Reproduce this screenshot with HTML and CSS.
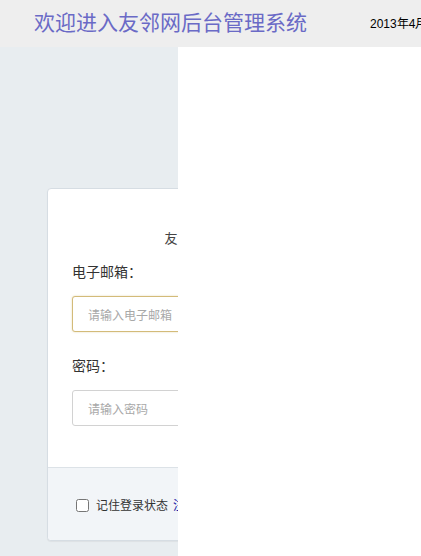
FILE: index.html
```html
<!DOCTYPE html>
<html lang="zh-CN">
<head>
    <meta charset="UTF-8">
    <title>友邻网后台管理系统</title>
    <link rel="stylesheet" href="styles.css">
</head>
<body>
    <div class="header">
        <h1>欢迎进入友邻网后台管理系统</h1>
        <div class="date">2013年4月25日 星期四</div>
    </div>
    <div class="main">
        <div class="login-box">
            <div class="login-body">
                <h2>友邻网后台登录</h2>
                <label class="field-label">电子邮箱：</label>
                <input class="field focus" type="text" placeholder="请输入电子邮箱">
                <label class="field-label">密码：</label>
                <input class="field" type="password" placeholder="请输入密码">
            </div>
            <div class="login-foot">
                <input type="checkbox" class="remember">
                <span>记住登录状态</span>
                <a href="#">注册新用户</a>
            </div>
        </div>
        <div class="frame"></div>
    </div>
</body>
</html>
```

FILE: styles.css
```css
body {
    margin: 0;
    font-family: "Noto Sans CJK SC", sans-serif;
    background-color: #e8edf0;
    color: #333;
    overflow: hidden;
}
.header {
    height: 47px;
    background-color: #eeeeee;
    display: flex;
    align-items: center;
    white-space: nowrap;
}
.header h1 {
    margin: 0 0 0 34px;
    font-size: 21px;
    font-weight: normal;
    color: #6a6ac6;
    line-height: 40px;
    position: relative;
    top: -3px;
}
.header .date {
    margin-left: 63px;
    font-family: "Liberation Sans", Arial, sans-serif;
    font-size: 12px;
    color: #000;
    position: relative;
    top: -1px;
}
.main {
    position: relative;
    height: 509px;
    padding: 141px 0 0 47px;
    box-sizing: border-box;
}
.login-box {
    width: 300px;
    background-color: #fff;
    border: 1px solid #d6dde3;
    border-radius: 4px;
    box-shadow: 0 1px 1px rgba(0, 0, 0, 0.05);
}
.login-body {
    padding: 39px 0 41px 24px;
    display: flex;
    flex-direction: column;
    align-items: flex-start;
}
.login-body h2 {
    align-self: stretch;
    margin: 0 0 13px;
    font-size: 13px;
    font-weight: normal;
    line-height: 20px;
    text-align: center;
    color: #444;
}
.field-label {
    font-size: 14px;
    line-height: 20px;
    color: #333;
}
.field {
    margin: 15px 0 23px;
    width: 240px;
    height: 36px;
    box-sizing: border-box;
    padding: 0 15px;
    border: 1px solid #d2d2d2;
    border-radius: 3px;
    font-family: "Noto Sans CJK SC", sans-serif;
    font-size: 12px;
    outline: none;
}
.field:last-child {
    margin-bottom: 0;
}
.field::placeholder {
    color: #a8a8a8;
}
.field.focus {
    border-color: #d3bb79;
    box-shadow: 0 0 2px rgba(211, 187, 121, 0.6);
}
.login-foot {
    border-top: 1px solid #dce2e7;
    background-color: #f2f5f8;
    border-radius: 0 0 4px 4px;
    padding: 27px 0 25px 28px;
    display: flex;
    align-items: center;
    font-size: 12px;
    line-height: 20px;
}
.remember {
    margin: 0 7px 0 0;
    width: 13px;
    height: 13px;
}
.login-foot a {
    margin-left: 5px;
    color: #1a1aa6;
    text-decoration: none;
}
.frame {
    position: absolute;
    left: 178px;
    top: 0;
    right: 0;
    bottom: 0;
    background-color: #fff;
}
```
